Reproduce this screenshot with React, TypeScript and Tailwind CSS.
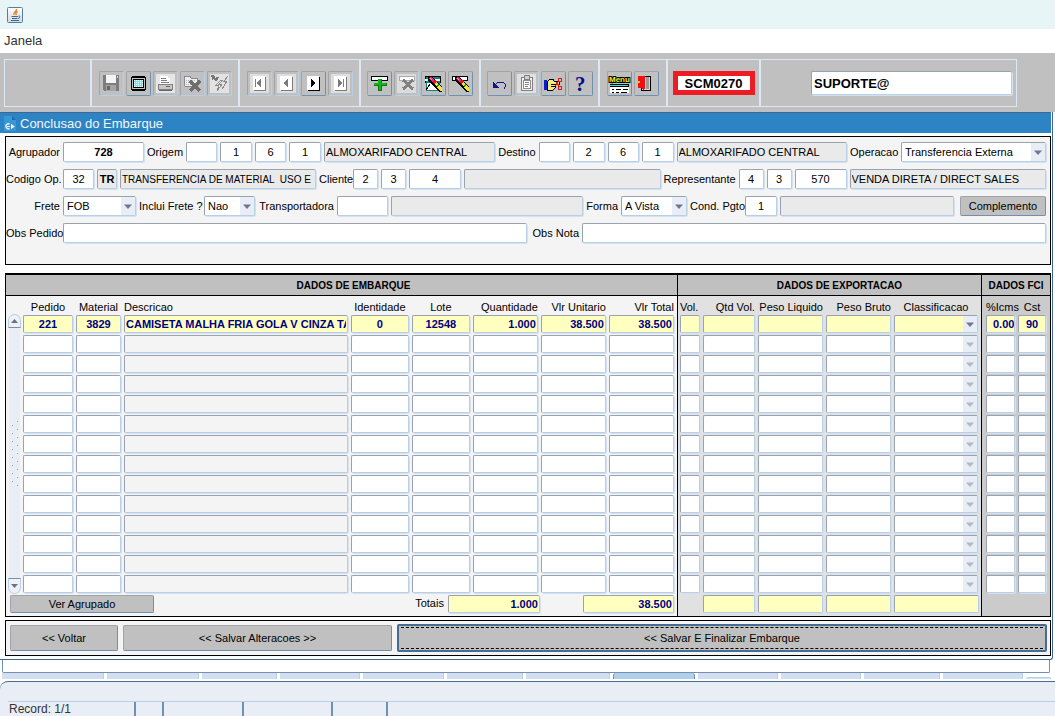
import type { ReactNode } from "react";
import clsx from "clsx";

type Align = "left" | "center" | "right";

const FIELD =
  "block min-w-0 rounded-[2px] border border-t-[#98a3af] border-l-[#98a3af] border-r-[#b8cfe5] border-b-[#b8cfe5] shadow-[1px_1px_0_#d3e1f1] outline-none";

const BUTTON =
  "rounded-[2px] border border-t-[#a0a4a8] border-l-[#a0a4a8] border-r-[#6f90b0] border-b-[#6f90b0] bg-[#c0c0c0] text-[11px] text-black";

const alignClass: Record<Align, string> = {
  left: "text-left",
  center: "text-center",
  right: "text-right",
};

function Label({ htmlFor, className, children }: { htmlFor: string; className: string; children: ReactNode }) {
  return (
    <label htmlFor={htmlFor} className={clsx("shrink-0 whitespace-nowrap text-right text-[11px]", className)}>
      {children}
    </label>
  );
}

function Field({
  id, label, value = "", width, align = "center", readOnly, bold, small,
}: {
  id?: string;
  label?: string;
  value?: string;
  width: string;
  align?: Align;
  readOnly?: boolean;
  bold?: boolean;
  small?: boolean;
}) {
  return (
    <input
      id={id}
      aria-label={label}
      defaultValue={value}
      readOnly={readOnly}
      className={clsx(
        FIELD, "h-5 px-px", width, alignClass[align],
        small ? "text-[10px]" : "text-[11px]",
        readOnly ? "bg-[#eaeaea]" : "bg-white",
        bold && "font-bold"
      )}
    />
  );
}

function Arrow({ muted }: { muted?: boolean }) {
  return (
    <span className="pointer-events-none absolute inset-y-px right-px flex w-3.5 items-center justify-center bg-[#e9edf5]">
      <svg width="8" height="5" viewBox="0 0 8 5">
        <path d="M0 0.5h8L4 5z" fill={muted ? "#b4b8c0" : "#6f7890"} />
      </svg>
    </span>
  );
}

function Select({ id, value, width }: { id: string; value: string; width: string }) {
  return (
    <div className={clsx("relative shrink-0", width)}>
      <select id={id} defaultValue={value} className={clsx(FIELD, "h-5 w-full appearance-none bg-white pl-[3px] text-[11px]")}>
        <option>{value}</option>
      </select>
      <Arrow />
    </div>
  );
}

/* Toolbar */

function ToolButton({ title, disabled, children }: { title: string; disabled?: boolean; children: ReactNode }) {
  return (
    <button
      type="button"
      title={title}
      disabled={disabled}
      className={clsx(
        "h-[25px] w-[25px] rounded-[2px] border border-t-[#a0a4a8] border-l-[#a0a4a8] bg-[#c0c0c0]",
        disabled ? "border-r-[#b8cfe5] border-b-[#b8cfe5]" : "border-r-[#6f90b0] border-b-[#6f90b0]"
      )}
    >
      <svg width="23" height="23" viewBox="0 0 23 23" shapeRendering="crispEdges">
        {children}
      </svg>
    </button>
  );
}

function ToolGroup({ className, children }: { className: string; children?: ReactNode }) {
  return (
    <div className={clsx("flex items-center justify-center gap-0.5 border-l-2 border-[#dce8f4]", className)}>
      {children}
    </div>
  );
}

function NavIcon({ dir, bar, active }: { dir: "l" | "r"; bar?: boolean; active?: boolean }) {
  const c = active ? "#000" : "#7c7c7c";
  return (
    <>
      {!active && <rect x="2" y="2" width="19" height="19" fill="#dedede" />}
      <rect x="6" y="5" width="12" height="14" fill={c} />
      <rect x="5" y="4" width="12" height="14" fill="#fff" />
      {dir === "l" ? (
        <path d="M13 7v8h-1v-1h-1v-1h-1v-1h-1v-2h1V9h1V8h1V7z" fill={c} />
      ) : (
        <path d="M9 7v8h1v-1h1v-1h1v-1h1v-2h-1V9h-1V8h-1V7z" fill={c} />
      )}
      {bar && <rect x={dir === "l" ? 7 : 14} y="7" width="1" height="8" fill={c} />}
    </>
  );
}

function Pencil() {
  return (
    <>
      <path d="M6 5l3-1 5 4 6 7v5h-3l-6-6-5-6z" fill="#000" />
      <path d="M7 6l2-1 4 3-2 3-4-4z" fill="#f0189c" />
      <path d="M10 10l3-2 2 2-2 3z" fill="#e81010" />
      <path d="M8 6l2 2" stroke="#ffc040" />
      <path d="M12 12l2-2 2 2-2 2z" fill="#f4e636" />
      <path d="M14 14l2-2 1 1-2 2z" fill="#129a38" />
      <path d="M15 15l2-2 3 3v3h-2z" fill="#f4e636" />
    </>
  );
}

function Toolbar() {
  return (
    <div className="bg-[#c0c0c0] px-1 pt-[6px] pb-[5px]">
      <div className="mr-[34px] flex h-12 border border-[#dce8f4]">
        <div className="w-[85px] shrink-0" />
        <ToolGroup className="w-[148px] shrink-0">
          <ToolButton title="Salvar" disabled>
            <path d="M3 3h16v16H4l-1-1z" fill="#7d7d7d" />
            <rect x="6" y="3" width="10" height="8" fill="#f4f4f4" />
            <rect x="6" y="13" width="10" height="6" fill="#a5a5a5" />
            <rect x="7" y="14" width="3" height="4" fill="#666" />
            <rect x="17" y="4" width="1" height="2" fill="#ddd" />
          </ToolButton>
          <ToolButton title="Tela">
            <path d="M5 4h13v1h1v13h-1v1H5v-1H4V5h1z" fill="#000" />
            <path d="M5 6h13v11H5z" fill="#c0c0c0" />
            <rect x="6" y="7" width="11" height="9" fill="#000" />
            <rect x="7" y="8" width="9" height="7" fill="#6ce8ee" />
            <path d="M7 8.5h9M7 10.5h9M7 12.5h9M7 14.5h9" stroke="#fff" strokeDasharray="1 1" />
          </ToolButton>
          <ToolButton title="Imprimir" disabled>
            <rect x="2" y="2" width="19" height="19" fill="#e6e6e6" />
            <path d="M6 4h8v2h2v6H6z" fill="#fff" />
            <path d="M7 6h5M7 8h6M7 10h8" stroke="#808080" />
            <path d="M5 12h13v5H4v-4z" fill="#c8c8c8" stroke="#808080" />
            <path d="M5 18h13v1H5zM12 14h4v1h-4z" fill="#666" />
          </ToolButton>
          <ToolButton title="Cancelar" disabled>
            <path d="M3 6V5l1-1h5l1 2h6v8H4z" fill="#eee" stroke="#8a8a8a" />
            <path d="M5 8h9M5 10h6M5 12h6" stroke="#b4b4b4" strokeDasharray="1 1" />
            <path d="M9 9l10 10M19 9L9 19" stroke="#6e6e6e" strokeWidth="3" />
          </ToolButton>
          <ToolButton title="Executar" disabled>
            <rect x="2" y="2" width="19" height="19" fill="#e2e2e2" />
            <path d="M3 4h2l3 4 2-3M4 7l3-2" fill="none" stroke="#777" strokeWidth="2" />
            <path d="M13 8l-5 5h3l-2 6 5-7h-3l4-4z" fill="#fff" stroke="#888" />
            <path d="M20 4l-4 5h3l-5 8" fill="none" stroke="#888" />
          </ToolButton>
        </ToolGroup>
        <ToolGroup className="w-[121px] shrink-0">
          <ToolButton title="Primeiro" disabled><NavIcon dir="l" bar /></ToolButton>
          <ToolButton title="Anterior" disabled><NavIcon dir="l" /></ToolButton>
          <ToolButton title="Proximo"><NavIcon dir="r" active /></ToolButton>
          <ToolButton title="Ultimo" disabled><NavIcon dir="r" bar /></ToolButton>
        </ToolGroup>
        <ToolGroup className="w-[120px] shrink-0">
          <ToolButton title="Inserir">
            <path d="M3 4h16v4H3z" fill="#fff" stroke="#000" />
            <path d="M10 7h4v4h5v3h-5v5h-4v-5H6v-3h4z" fill="#0b7a12" />
            <path d="M10 7h3v4h5v2h-5v5h-2v-5H6v-2h4z" fill="#10b41c" />
          </ToolButton>
          <ToolButton title="Remover" disabled>
            <rect x="2" y="2" width="19" height="19" fill="#dcdcdc" />
            <path d="M4 4h15v4H4z" fill="#fff" stroke="#aaa" />
            <path d="M8 8l10 9M18 8L8 17" stroke="#808080" strokeWidth="3" />
          </ToolButton>
          <ToolButton title="Consultar">
            <path d="M3 4h15v6H3z" fill="#0d8080" stroke="#000" />
            <path d="M3 7h15v2H3z" fill="#e8f4f4" />
            <path d="M4 10h13v8H4z" fill="#fff" stroke="#0d8080" />
            <path d="M4 18l4-6" stroke="#000" />
            <Pencil />
          </ToolButton>
          <ToolButton title="Limpar">
            <path d="M3 4h15v4H3z" fill="#fff" stroke="#000" />
            <Pencil />
          </ToolButton>
        </ToolGroup>
        <ToolGroup className="w-[119px] shrink-0">
          <ToolButton title="Desfazer">
            <path d="M7 13l3-3h5l2 2v3l-1 2" fill="none" stroke="#14148c" />
            <path d="M5 10v6h6z" fill="#14148c" />
          </ToolButton>
          <ToolButton title="Colar" disabled>
            <rect x="2" y="2" width="19" height="19" fill="#e0e0e0" />
            <path d="M6 5h11v13H6z" fill="#f2f2f2" stroke="#808080" />
            <path d="M8 8h7v8H8z" fill="#fff" stroke="#8c8c8c" />
            <path d="M9 3h5v4H9z" fill="#d0d0d0" stroke="#808080" />
            <path d="M10 10h4M10 12h4M10 14h3" stroke="#808080" />
          </ToolButton>
          <ToolButton title="Recortar">
            <path d="M2 8h3v10H2z" fill="#0a1ec8" />
            <path d="M5 10l3-3h3l1 2h5v3h-4v4l-2 2H5z" fill="#f2ec7c" stroke="#000" />
            <path d="M9 12h4M9 14h4" stroke="#000" />
            <path d="M16 6h3v3h-3zM16 14h3v3h-3zM13 14l4-5M17 14l-3-4" fill="none" stroke="#e01818" />
          </ToolButton>
          <ToolButton title="Ajuda">
            <text x="6" y="19" fontSize="21" fontWeight="bold" fontFamily="Liberation Serif, serif" fill="#0a0a8c">?</text>
          </ToolButton>
        </ToolGroup>
        <ToolGroup className="w-[68px] shrink-0">
          <ToolButton title="Menu">
            <text
              x="1"
              y="10"
              fontSize="8"
              fontWeight="bold"
              fontFamily="Liberation Sans, sans-serif"
              fill="#f6f020"
              stroke="#000"
              strokeWidth="2"
              paintOrder="stroke"
            >
              Menu
            </text>
            <rect x="2" y="12" width="19" height="9" fill="#fff" />
            <rect x="2" y="12" width="19" height="3" fill="#000" />
            <rect x="2" y="13" width="18" height="1" fill="#20e8f0" />
            <path d="M4 17.5h2M8 17.5h5M15 17.5h5M4 20.5h2M8 20.5h3M13 20.5h6" stroke="#000" />
          </ToolButton>
          <ToolButton title="Sair">
            <rect x="6" y="4" width="9" height="14" fill="#d8d8d8" stroke="#000" strokeWidth="1" />
            <rect x="11" y="5" width="3" height="12" fill="#9a9a9a" />
            <path d="M3 4h7v13l-2 1-2-2H3z" fill="#f01010" />
            <rect x="3" y="9" width="2" height="2" fill="#f8c020" />
          </ToolButton>
        </ToolGroup>
        <ToolGroup className="w-[93px] shrink-0">
          <input
            aria-label="Programa"
            defaultValue="SCM0270"
            className="h-6 w-[82px] border-5 border-[#ed1c24] bg-white text-center text-[13px] font-bold outline-none"
          />
        </ToolGroup>
        <ToolGroup className="min-w-0 flex-1 pr-1 pl-[50px]">
          <input
            aria-label="Usuario"
            defaultValue="SUPORTE@"
            className={clsx(FIELD, "h-6 flex-1 bg-white px-0.5 text-[13px] font-bold")}
          />
        </ToolGroup>
      </div>
    </div>
  );
}

/* Shipment header form */

function ShipmentForm() {
  return (
    <form className="flex flex-col gap-[7px] border border-black bg-[#f4f4f4] pt-[5px] pr-1 pb-[21px]">
      <div className="flex items-center gap-[3px]">
        <Label htmlFor="agrupador" className="w-[54px]">Agrupador</Label>
        <Field id="agrupador" value="728" width="w-[81px]" bold />
        <Label htmlFor="origem" className="w-9">Origem</Label>
        <Field id="origem" width="w-[31px]" />
        <Field label="Origem empresa" value="1" width="w-8" />
        <Field label="Origem filial" value="6" width="w-[31px]" />
        <Field label="Origem deposito" value="1" width="w-8" />
        <Field label="Origem descricao" value="ALMOXARIFADO CENTRAL" width="flex-1" align="left" readOnly />
        <Label htmlFor="destino" className="w-[38px]">Destino</Label>
        <Field id="destino" width="w-[31px]" />
        <Field label="Destino empresa" value="2" width="w-8" />
        <Field label="Destino filial" value="6" width="w-[31px]" />
        <Field label="Destino deposito" value="1" width="w-8" />
        <Field label="Destino descricao" value="ALMOXARIFADO CENTRAL" width="flex-1" align="left" readOnly />
        <Label htmlFor="operacao" className="w-12">Operacao</Label>
        <Select id="operacao" value="Transferencia Externa" width="w-[145px]" />
      </div>
      <div className="flex items-center gap-[3px]">
        <Label htmlFor="codigo" className="w-[54px]">Codigo Op.</Label>
        <Field id="codigo" value="32" width="w-[31px]" />
        <Field label="Tipo" value="TR" width="w-5" readOnly bold />
        <Field label="Descricao operacao" value={"TRANSFERENCIA DE MATERIAL  USO E"} width="w-[196px]" align="left" readOnly small />
        <Label htmlFor="cliente" className="w-[31px]">Cliente</Label>
        <Field id="cliente" value="2" width="w-[25px]" />
        <Field label="Cliente filial" value="3" width="w-[25px]" />
        <Field label="Cliente codigo" value="4" width="w-[52px]" />
        <Field label="Cliente nome" width="flex-1" readOnly />
        <Label htmlFor="representante" className="w-[72px]">Representante</Label>
        <Field id="representante" value="4" width="w-[25px]" />
        <Field label="Representante filial" value="3" width="w-[25px]" />
        <Field label="Representante codigo" value="570" width="w-[52px]" />
        <Field label="Representante nome" value="VENDA DIRETA / DIRECT SALES" width="flex-1" align="left" readOnly />
      </div>
      <div className="flex items-center gap-[3px]">
        <Label htmlFor="frete" className="w-[54px]">Frete</Label>
        <Select id="frete" value="FOB" width="w-[73px]" />
        <Label htmlFor="inclui" className="w-[62px]">Inclui Frete ?</Label>
        <Select id="inclui" value="Nao" width="w-[51px]" />
        <Label htmlFor="transportadora" className="w-[76px]">Transportadora</Label>
        <Field id="transportadora" width="w-[51px]" />
        <Field label="Transportadora nome" width="flex-1" readOnly />
        <Label htmlFor="forma" className="w-8">Forma</Label>
        <Select id="forma" value="A Vista" width="w-[66px]" />
        <Label htmlFor="condpgto" className="w-[52px]">Cond. Pgto</Label>
        <Field id="condpgto" value="1" width="w-8" />
        <Field label="Condicao de pagamento" width="w-[174px]" readOnly />
        <button type="button" className={clsx(BUTTON, "ml-[3px] h-5 w-[86px]")}>Complemento</button>
      </div>
      <div className="flex items-center gap-[3px]">
        <Label htmlFor="obspedido" className="w-[54px]">Obs Pedido</Label>
        <Field id="obspedido" width="flex-1" align="left" />
        <Label htmlFor="obsnota" className="w-[49px]">Obs Nota</Label>
        <Field id="obsnota" width="flex-1" align="left" />
      </div>
    </form>
  );
}

/* Items table */

type Column = {
  name: string;
  width?: string;
  cell: string;
  head: Align;
  align: Align;
  value: string;
  kind?: "select" | "description" | "percent";
};

const SHIP = "bg-[#f4f4f4] pl-px pr-0.5";
const EXPORT = "bg-[#e1e1e1] pl-px pr-0.5";
const FCI = "bg-[#cbcbcb]";

const columns: Column[] = [
  { name: "Pedido", width: "w-[53px]", cell: SHIP, head: "center", align: "center", value: "221" },
  { name: "Material", width: "w-12", cell: SHIP, head: "center", align: "center", value: "3829" },
  { name: "Descricao", cell: SHIP, head: "left", align: "left", value: "CAMISETA MALHA FRIA GOLA V CINZA TAM", kind: "description" },
  { name: "Identidade", width: "w-[61px]", cell: SHIP, head: "center", align: "center", value: "0" },
  { name: "Lote", width: "w-[61px]", cell: SHIP, head: "center", align: "center", value: "12548" },
  { name: "Quantidade", width: "w-[68px]", cell: SHIP, head: "right", align: "right", value: "1.000" },
  { name: "Vlr Unitario", width: "w-[68px]", cell: SHIP, head: "right", align: "right", value: "38.500" },
  { name: "Vlr Total", width: "w-[69px]", cell: "bg-[#f4f4f4] pl-px pr-[3px]", head: "right", align: "right", value: "38.500" },
  { name: "Vol.", width: "w-[25px]", cell: "border-l border-black bg-[#e1e1e1] pl-0.5 pr-0.5", head: "left", align: "right", value: "" },
  { name: "Qtd Vol.", width: "w-[55px]", cell: EXPORT, head: "right", align: "right", value: "" },
  { name: "Peso Liquido", width: "w-[68px]", cell: EXPORT, head: "right", align: "right", value: "" },
  { name: "Peso Bruto", width: "w-[68px]", cell: EXPORT, head: "right", align: "right", value: "" },
  { name: "Classificacao", width: "w-[88px]", cell: "bg-[#e1e1e1] pl-px pr-[3px]", head: "center", align: "left", value: "", kind: "select" },
  { name: "%Icms", width: "w-[35px]", cell: `border-l border-black pl-1 pr-px ${FCI}`, head: "left", align: "left", value: "0.000", kind: "percent" },
  { name: "Cst", width: "w-[34px]", cell: `pl-0.5 pr-1 ${FCI}`, head: "center", align: "center", value: "90" },
];

const ROWS = 14;

function ItemCell({ column, row }: { column: Column; row: number }) {
  const current = row === 0;
  const label = `${column.name} ${row + 1}`;
  const bg = current ? "bg-[#ffffc0]" : column.kind === "description" ? "bg-[#f4f4f4]" : "bg-white";
  const text = "h-[18px] w-full text-[11px] font-bold text-[#000080]";
  if (column.kind === "select") {
    return (
      <div className="relative">
        <select aria-label={label} className={clsx(FIELD, text, bg, "appearance-none")}>
          <option></option>
        </select>
        <Arrow muted={!current} />
      </div>
    );
  }
  return (
    <input
      aria-label={label}
      defaultValue={current ? column.value : ""}
      className={clsx(FIELD, text, bg, alignClass[column.align], column.kind === "percent" ? "pl-1.5" : "px-px")}
    />
  );
}

function RowScroller() {
  return (
    <div className="flex h-[280px] flex-col items-center">
      <button type="button" title="Subir" className="flex h-3.5 w-[13px] items-center justify-center rounded-t-full border border-[#b8cfe5] border-b-[#7890a8] bg-[#eef1f7]">
        <svg width="7" height="4" viewBox="0 0 7 4"><path d="M0 4h7L3.5 0z" fill="#6f7080" /></svg>
      </button>
      <div className="flex w-[11px] flex-1 items-center justify-center bg-[#e9edf5]">
        <svg width="9" height="68" viewBox="0 0 9 68" shapeRendering="crispEdges">
          <defs>
            <pattern id="grip" width="9" height="8" patternUnits="userSpaceOnUse">
              <rect x="6" y="1" width="1" height="1" fill="#fff" />
              <rect x="7" y="2" width="1" height="1" fill="#7f9fc0" />
              <rect x="1" y="5" width="1" height="1" fill="#fff" />
              <rect x="2" y="6" width="1" height="1" fill="#7f9fc0" />
            </pattern>
          </defs>
          <rect width="9" height="68" fill="url(#grip)" />
        </svg>
      </div>
      <button type="button" title="Descer" className="flex h-4 w-[13px] items-center justify-center rounded-b-full border border-[#b8cfe5] border-t-[#7890a8] bg-[#eef1f7]">
        <svg width="7" height="4" viewBox="0 0 7 4"><path d="M0 0h7L3.5 4z" fill="#6f7080" /></svg>
      </button>
    </div>
  );
}

function TotalField({ label, value = "", width }: { label: string; value?: string; width: string }) {
  return (
    <input
      aria-label={label}
      defaultValue={value}
      readOnly
      className={clsx(FIELD, "h-[18px] bg-[#ffffc0] px-px text-right text-[11px] font-bold text-[#000080]", width)}
    />
  );
}

function ItemsTable() {
  const groupHead = "h-[21px] border-b border-black bg-[#c0c0c0] text-[10px] font-bold";
  return (
    <table className="w-full table-fixed border-separate border-spacing-0 border border-t-2 border-black">
      <colgroup>
        <col className="w-4" />
        {columns.map((c) => (
          <col key={c.name} className={c.width} />
        ))}
      </colgroup>
      <thead>
        <tr>
          <th colSpan={9} className={clsx(groupHead, "pl-6")}>DADOS DE EMBARQUE</th>
          <th colSpan={5} className={clsx(groupHead, "border-l pl-5")}>DADOS DE EXPORTACAO</th>
          <th colSpan={2} className={clsx(groupHead, "border-l whitespace-nowrap")}>DADOS FCI</th>
        </tr>
        <tr>
          <td className="h-[18px] bg-[#f4f4f4]" />
          {columns.map((c) => (
            <th
              key={c.name}
              className={clsx("h-[18px] whitespace-nowrap pt-1 text-[11px] leading-[14px] font-normal", c.cell, alignClass[c.head])}
            >
              {c.name}
            </th>
          ))}
        </tr>
      </thead>
      <tbody>
        {Array.from({ length: ROWS }, (_, row) => (
          <tr key={row}>
            {row === 0 && (
              <td rowSpan={ROWS} className="bg-[#f4f4f4] align-top">
                <RowScroller />
              </td>
            )}
            {columns.map((c) => (
              <td key={c.name} className={clsx("h-5 py-px", c.cell)}>
                <ItemCell column={c} row={row} />
              </td>
            ))}
          </tr>
        ))}
      </tbody>
      <tfoot>
        <tr>
          <td colSpan={9} className="h-[22px] bg-[#f4f4f4] pr-[3px] pb-[3px] pl-1">
            <div className="flex h-[18px] items-center">
              <button type="button" className={clsx(BUTTON, "h-[18px] w-36")}>Ver Agrupado</button>
              <span className="ml-auto pr-1 text-[11px]">Totais</span>
              <TotalField label="Total quantidade" value="1.000" width="w-[92px]" />
              <TotalField label="Total valor" value="38.500" width="ml-[43px] w-[91px]" />
            </div>
          </td>
          <td className="border-l border-black bg-[#e1e1e1]" />
          {["Total Qtd Vol.", "Total Peso Liquido", "Total Peso Bruto", "Total Classificacao"].map((t) => (
            <td key={t} className={clsx("pb-[3px]", EXPORT)}>
              <TotalField label={t} width="w-full" />
            </td>
          ))}
          <td colSpan={2} className={clsx("border-l border-black", FCI)} />
        </tr>
      </tfoot>
    </table>
  );
}

/* Window footer */

const tabs = [
  "w-[102px]", "w-[92px]", "w-[75px]", "w-20", "w-[81px]", "w-[76px]", "w-[84px]",
  "w-[82px]", "w-20", "w-20", "w-[76px]", "w-20",
];

const ACTIVE_TAB = 7;

function TabStrip() {
  return (
    <div className="mr-1 ml-0.5 pb-0.5">
      <div className="mr-px h-[13px] rounded-b-[2px] border border-t-0 border-[#7090b8] bg-white" />
      <div className="flex h-[6px] gap-[3px] overflow-hidden">
        {tabs.map((w, i) => (
          <div
            key={i}
            className={clsx(
              "shrink-0", w,
              i === ACTIVE_TAB ? "rounded-t-[3px] border-x border-[#7090b8] bg-[#b0cfe9]" : "border-r border-[#b8cfe5] bg-[#d3deef]"
            )}
          />
        ))}
        <div className="mt-1 flex-1 rounded-t-[2px] border border-b-0 border-[#b8cfe5] bg-[#d3deef]" />
      </div>
    </div>
  );
}

const statusCells = ["w-32", "w-7", "w-20", "w-[89px]", "w-[55px]"];

export default function App() {
  return (
    <div className="min-h-screen bg-white font-['Liberation_Sans',Arial,sans-serif] text-black">
      <header className="flex h-[29px] items-center bg-[#e8f5f7] px-[7px]">
        <svg width="16" height="16" viewBox="0 0 16 16">
          <defs>
            <linearGradient id="tile" x1="0" y1="0" x2="0" y2="1">
              <stop offset="0" stopColor="#fff" />
              <stop offset="1" stopColor="#cfd8e0" />
            </linearGradient>
          </defs>
          <rect x="0.5" y="0.5" width="15" height="15" rx="1" fill="url(#tile)" stroke="#5b7d99" />
          <path d="M9.500 2C10.500 4 6 4.500 7 8M10.500 4.500C8.500 5.500 8.500 6.500 9.500 8" fill="none" stroke="#e8862a" strokeWidth="1.5" />
          <path d="M4.500 9.500h6.500M5 11.500h5.500M4 13.500h8M11.500 9c2-0.500 2 2-0.500 2.500" fill="none" stroke="#40688c" />
        </svg>
      </header>
      <nav className="flex h-6 items-center px-1">
        <button type="button" className="text-[13px] text-[#333]">Janela</button>
      </nav>
      <Toolbar />

      <main className="mr-0.5 rounded-br-[3px] border-r border-b border-[#3f6791] bg-white pb-[3px]">
        <div className="mr-px flex h-[21px] items-center gap-1 border-t border-[#3f6791] bg-[#2d84c4] pt-px pl-1">
          <svg width="12" height="15" viewBox="0 0 12 15">
            <path d="M0 0h8l4 4v11H0z" fill="#3a97d6" />
            <path d="M8 0v4h4z" fill="#1f6ba6" />
            <path d="M5.500 8a2.500 2.500 0 1 0 0 4.500" fill="none" stroke="#e8f4ff" strokeWidth="1.500" />
            <path d="M3 10.500h3" stroke="#e8f4ff" />
            <path d="M7 8v5l4-2.500z" fill="#fff" />
          </svg>
          <h1 className="text-[13px] leading-5 text-[#f0f6fb]">Conclusao do Embarque</h1>
        </div>
        <div className="mr-px ml-[5px] pt-[3px]">
          <ShipmentForm />
          <div className="pt-2 pb-[3px]">
            <ItemsTable />
          </div>
          <div className="flex h-9 items-center gap-[5px] border border-black bg-[#f4f4f4] pr-[3px] pl-1">
            <button type="button" className={clsx(BUTTON, "h-[26px] w-[108px]")}>&lt;&lt; Voltar</button>
            <button type="button" className={clsx(BUTTON, "h-[26px] w-[269px]")}>&lt;&lt; Salvar Alteracoes &gt;&gt;</button>
            <button type="button" className="h-7 flex-1 rounded-[2px] border-2 border-[#466c94] bg-[#c0c0c0] px-0.5 text-[11px]">
              <span className="flex h-[22px] items-center justify-center border-y border-dashed border-black">
                &lt;&lt; Salvar E Finalizar Embarque
              </span>
            </button>
          </div>
        </div>
      </main>

      <TabStrip />

      <footer className="rounded-tl-lg border-t border-[#4a6c94] bg-[#e9edf6] pt-[19px] text-[#333]">
        <div className="ml-2 flex h-[15px] border-t border-[#b8cfe5]">
          {statusCells.map((w, i) => (
            <div key={i} className={clsx("border-r-2 border-[#7090b0] pl-px text-[12px] leading-[14px]", w)}>
              {i === 0 && "Record: 1/1"}
            </div>
          ))}
        </div>
      </footer>
    </div>
  );
}
